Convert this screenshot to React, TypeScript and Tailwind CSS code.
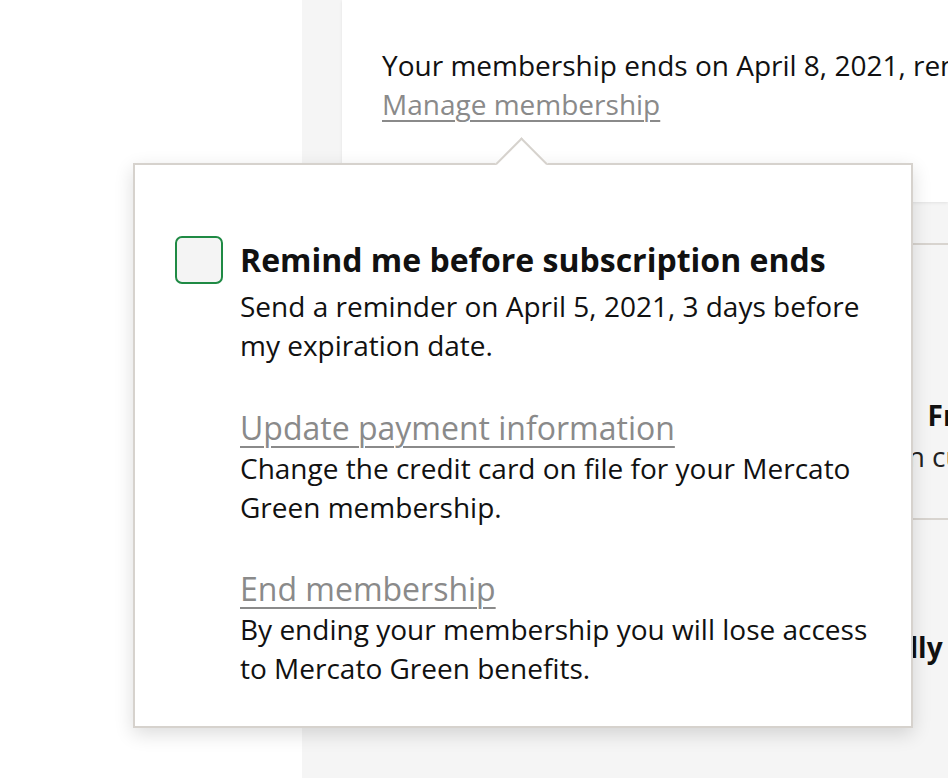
import React from "react";

const benefits = [
  {
    title: "Free delivery",
    text: "Delivery on curbside and home orders",
    pad: "pt-[150px] pb-[42px] border-b-2 border-[#d8d4cf]",
    offset: "ml-[326px] w-[700px]",
  },
  {
    title: "Friendly local shoppers",
    text: "",
    pad: "pt-[107px] pb-[40px]",
    offset: "ml-[458px] w-[380px]",
  },
];

export default function App() {
  return (
    <div className="relative flex h-[778px] w-[948px] overflow-hidden bg-white font-['Open_Sans',sans-serif] text-[#111]">
      {/* left column */}
      <div className="w-[302px] shrink-0 bg-white" />

      {/* main area */}
      <div className="min-w-0 flex-1 bg-[#f5f5f5] pl-10">
        <div className="h-[202px] bg-white pl-10 pt-[46px] shadow-[0_1px_3px_rgba(0,0,0,0.08)]">
          <p className="whitespace-nowrap text-[28px] leading-[39px]">
            Your membership ends on April 8, 2021, renewal is off.
          </p>
          <a className="text-[28px] leading-[39px] text-[#8a8a8a] underline underline-offset-[5px] decoration-[2px]">
            Manage membership
          </a>
        </div>

        <div className="mt-[41px] border-t-2 border-[#d8d4cf]">
          {benefits.map((b) => (
            <div key={b.title} className={`${b.pad} flex`}>
              <div className={`${b.offset} shrink-0 text-center`}>
                <div className="whitespace-nowrap text-[28px] font-bold leading-[40px]">{b.title}</div>
                {b.text && (
                  <div className="mt-[2px] whitespace-nowrap pl-[20px] text-[28px] leading-[39px] text-[#222]">
                    {b.text}
                  </div>
                )}
              </div>
            </div>
          ))}
        </div>
      </div>

      {/* popover */}
      <div className="absolute left-[133px] top-[163px] w-[780px] border-2 border-[#d6d2cd] bg-white pb-[39px] pl-10 pr-[31px] pt-[73px] shadow-[0_6px_18px_rgba(0,0,0,0.14)]">
        <div className="absolute left-[368px] top-[-20px] h-[37px] w-[37px] rotate-45 border-l-2 border-t-2 border-[#d6d2cd] bg-white" />

        <div className="flex gap-[17px]">
          <div className="mt-[-2px] h-[48px] w-[48px] shrink-0 rounded-[7px] border-2 border-[#1f8a44] bg-[#f4f4f4]" />
          <div className="flex-1">
            <div className="text-[32px] font-bold leading-[44px]">Remind me before subscription ends</div>
            <p className="mt-[5px] text-[28px] leading-[38.5px]">
              Send a reminder on April 5, 2021, 3 days before my expiration date.
            </p>

            <a className="mt-[42px] block text-[32px] leading-[44px] text-[#8a8a8a] underline underline-offset-[6px] decoration-[2px]">
              Update payment information
            </a>
            <p className="mt-[-1px] text-[28px] leading-[38.5px]">
              Change the credit card on file for your Mercato Green membership.
            </p>

            <a className="mt-[41px] block text-[32px] leading-[44px] text-[#8a8a8a] underline underline-offset-[6px] decoration-[2px]">
              End membership
            </a>
            <p className="mt-[-1px] text-[28px] leading-[38.5px]">
              By ending your membership you will lose access to Mercato Green benefits.
            </p>
          </div>
        </div>
      </div>
    </div>
  );
}
